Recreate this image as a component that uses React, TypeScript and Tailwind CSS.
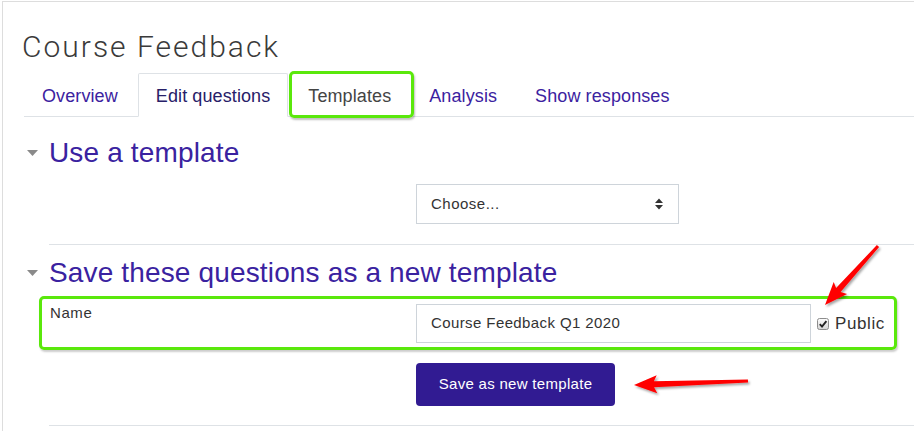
import React from "react"

const arrowPoints = (tx: number, ty: number, sx: number, sy: number, headLen: number, headHalf: number, w1: number, w2: number) => {
    const len = Math.hypot(sx - tx, sy - ty)
    const dx = (sx - tx) / len
    const dy = (sy - ty) / len
    const nx = -dy
    const ny = dx
    const bx = tx + dx * headLen
    const by = ty + dy * headLen
    const kx = tx + dx * (headLen + 3)
    const ky = ty + dy * (headLen + 3)
    const pts = [
        [tx, ty],
        [kx + nx * headHalf, ky + ny * headHalf],
        [bx + nx * w1, by + ny * w1],
        [sx + nx * w2, sy + ny * w2],
        [sx - nx * w2, sy - ny * w2],
        [bx - nx * w1, by - ny * w1],
        [kx - nx * headHalf, ky - ny * headHalf],
    ]
    return pts.map((p) => `${p[0].toFixed(1)},${p[1].toFixed(1)}`).join(" ")
}

const tabs = [
    { label: "Overview", cls: "text-[#3b22a0] border-transparent" },
    { label: "Edit questions", cls: "text-[#272068] border-[#dee2e6] bg-white border-b-white" },
    { label: "Templates", cls: "text-[#444] border-transparent", highlight: true },
    { label: "Analysis", cls: "text-[#3b22a0] border-transparent" },
    { label: "Show responses", cls: "text-[#3b22a0] border-transparent" },
]

const Caret = () => (
    <svg width="11" height="6" viewBox="0 0 11 6" className="shrink-0">
        <path d="M0 0 H11 L5.5 6 Z" fill="#8a8a8a" />
    </svg>
)

const SectionHeading = ({ title }: { title: string }) => (
    <div className="flex items-center gap-[11px] pl-[3px]">
        <Caret />
        <h3 className="text-[28px] leading-[34px] tracking-[0.15px] text-[#3a22a0] font-normal">{title}</h3>
    </div>
)

export default function App() {
    return (
        <div className="relative w-[914px] h-[431px] overflow-hidden bg-white font-['Liberation_Sans',Arial,sans-serif]">
            <div className="ml-[2px] mt-[1px] h-[440px] border-l border-t border-[#dddddd] pl-[21px] pt-[27px]">
                <h1 className="-ml-[2px] font-['Roboto',sans-serif] font-light text-[30px] leading-[36px] tracking-[2px] text-[#3a3a3a]">Course Feedback</h1>

                <ul className="mt-[8px] flex gap-[2px] border-b border-[#dee2e6]">
                    {tabs.map((tab) => (
                        <li key={tab.label} className="relative -mb-px">
                            <a className={`block border px-[17px] pt-[10px] pb-[8px] text-[18px] leading-[24px] tracking-[0.1px] rounded-t-[2px] ${tab.cls}`}>
                                {tab.label}
                            </a>
                            {tab.highlight && (
                                <span className="absolute -top-[2px] -bottom-[1px] -left-[1px] -right-[5px] rounded-[5px] border-[3px] border-[#5ae80c] shadow-[1px_2px_2px_rgba(0,0,0,0.25)]" />
                            )}
                        </li>
                    ))}
                </ul>

                <div className="mt-[19px]">
                    <SectionHeading title="Use a template" />

                    <div className="ml-[25px] mt-[14px] flex">
                        <div className="w-[367px]" />
                        <div className="flex h-[40px] w-[263px] items-center justify-between border border-[#ced4da] pl-[14px] pr-[15px] text-[15px] tracking-[0.5px] text-[#333]">
                            <span>Choose...</span>
                            <svg width="8" height="12" viewBox="0 0 8 12">
                                <path d="M0 5 L4 0.5 L8 5 Z M0 7 L4 11.5 L8 7 Z" fill="#333" />
                            </svg>
                        </div>
                    </div>

                    <div className="ml-[25px] mt-[20px] border-t border-[#dee2e6]" />

                    <div className="mt-[11px]">
                        <SectionHeading title="Save these questions as a new template" />
                    </div>

                    <div className="ml-[15px] mt-[6px] flex w-[858px] rounded-[5px] border-[3px] border-[#5ae80c] pl-[8px] pt-[5px] pb-[4px] shadow-[1px_2px_2px_rgba(0,0,0,0.2)]">
                        <label className="w-[366px] -mt-[1px] text-[15px] leading-[20px] tracking-[0.6px] text-[#333]">Name</label>
                        <div className="flex h-[39px] w-[395px] items-center border border-[#ced4da] pl-[14px] text-[15px] tracking-[0.4px] text-[#333]">
                            Course Feedback Q1 2020
                        </div>
                        <div className="ml-[6px] flex h-[39px] items-center gap-[6px]">
                            <svg width="12" height="12" viewBox="0 0 12 12">
                                <defs>
                                    <linearGradient id="cb" x1="0" y1="0" x2="0" y2="1">
                                        <stop offset="0" stopColor="#fdfdfd" />
                                        <stop offset="1" stopColor="#d4d4d4" />
                                    </linearGradient>
                                </defs>
                                <rect x="0.5" y="0.5" width="11" height="11" rx="2" fill="url(#cb)" stroke="#8d8d8d" />
                                <path d="M2.8 6.2 L5 8.6 L9.4 3.2" fill="none" stroke="#222" strokeWidth="1.9" />
                            </svg>
                            <span className="text-[17px] tracking-[0.6px] text-[#333]">Public</span>
                        </div>
                    </div>

                    <div className="ml-[25px] mt-[13px] flex">
                        <div className="w-[367px]" />
                        <button className="h-[43px] w-[199px] rounded-[4px] bg-[#311b92] text-[15px] tracking-[0.3px] text-white">
                            Save as new template
                        </button>
                    </div>

                    <div className="ml-[25px] mt-[19px] border-t border-[#dee2e6]" />
                </div>
            </div>

            <svg className="pointer-events-none absolute left-0 top-0" width="914" height="431">
                <defs>
                    <filter id="sh" x="-20%" y="-20%" width="140%" height="140%">
                        <feDropShadow dx="1.5" dy="2" stdDeviation="1.2" floodColor="#000" floodOpacity="0.35" />
                    </filter>
                </defs>
                <polygon points={arrowPoints(825, 305, 878, 246, 20, 9, 3, 1.5)} fill="#ff0000" filter="url(#sh)" />
                <polygon points={arrowPoints(634, 385, 748, 381, 20, 9, 3, 1.5)} fill="#ff0000" filter="url(#sh)" />
            </svg>
        </div>
    )
}
